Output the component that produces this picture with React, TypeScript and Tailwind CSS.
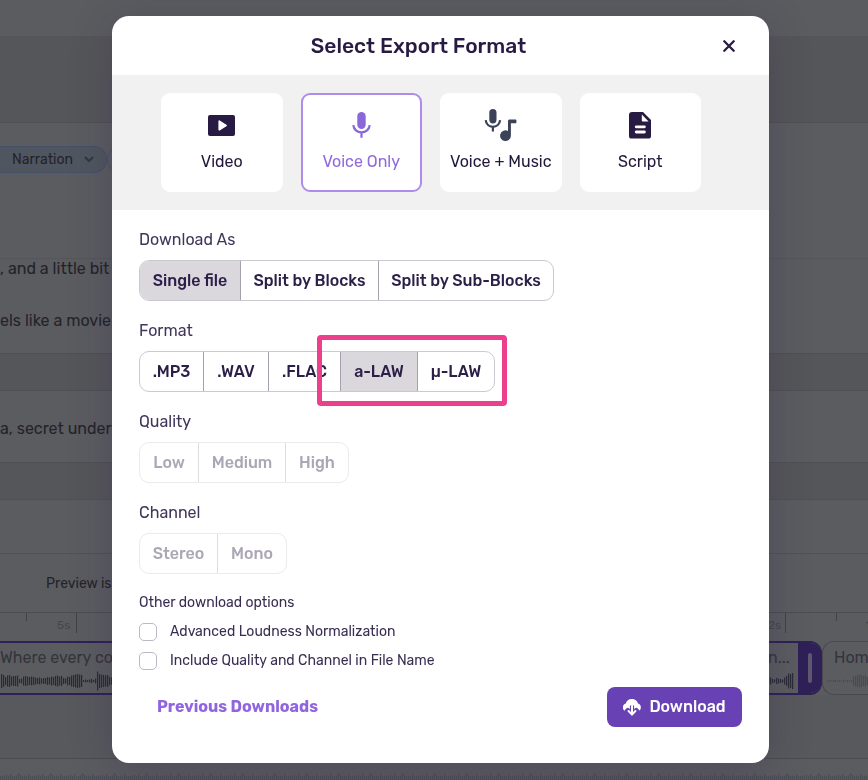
import type { ReactNode } from 'react'

type Option = { label: string; width: string }

const downloadAs: Option[] = [
  { label: 'Single file', width: 'w-[100px]' },
  { label: 'Split by Blocks', width: 'w-[138px]' },
  { label: 'Split by Sub-Blocks', width: 'w-[175px]' },
]

const formats: Option[] = [
  { label: '.MP3', width: 'w-[63px]' },
  { label: '.WAV', width: 'w-[65px]' },
  { label: '.FLAC', width: 'w-[72px]' },
  { label: 'a-LAW', width: 'w-[77px]' },
  { label: 'µ-LAW', width: 'w-[77px]' },
]

const qualities: Option[] = [
  { label: 'Low', width: 'w-[58px]' },
  { label: 'Medium', width: 'w-[87px]' },
  { label: 'High', width: 'w-[63px]' },
]

const channels: Option[] = [
  { label: 'Stereo', width: 'w-[77px]' },
  { label: 'Mono', width: 'w-[69px]' },
]

function OptionGroup({ label, options, selected, disabled, children }: {
  label: string
  options: Option[]
  selected?: string
  disabled?: boolean
  children?: ReactNode
}) {
  return (
    <div className="flex flex-col items-start">
      <span className="h-10 text-base leading-10 text-[#40355a]">{label}</span>
      <div role="group" aria-label={label} className={`relative flex h-[41px] rounded-[10px] border ${disabled ? 'border-[#ebeaed]' : 'border-[#cbc9d0]'}`}>
        {options.map((option, i) => (
          <button
            key={option.label}
            type="button"
            disabled={disabled}
            className={`${option.width} whitespace-nowrap text-base font-medium first:rounded-l-[9px] last:rounded-r-[9px] ${
              i > 0 ? 'border-l' : ''
            } ${disabled ? 'border-[#dddce1] text-[#aba7b4]' : 'border-[#a5a1ae] text-[#2b1f48]'} ${
              option.label === selected ? 'bg-[#dad8dd]' : ''
            }`}
          >
            {option.label}
          </button>
        ))}
        {children}
      </div>
    </div>
  )
}

function FormatCard({ label, active, children }: { label: string; active?: boolean; children: ReactNode }) {
  return (
    <button
      type="button"
      className={`flex h-[99px] flex-col items-center rounded-[9px] border-2 bg-white pt-3 text-base ${
        active ? 'border-[#ae8bee] text-[#9169dc]' : 'border-white text-[#23183b]'
      }`}
    >
      <span className="flex h-9 items-center justify-center">{children}</span>
      <span className="mt-1 whitespace-nowrap leading-[30px]">{label}</span>
    </button>
  )
}

function VideoIcon() {
  return (
    <svg width="27" height="21" viewBox="0 0 27 21">
      <rect width="27" height="21" rx="2" fill="#281b43" />
      <path d="M10.4 6.2c0-.7.7-1.1 1.3-.8l6.7 4.3c.6.4.6 1.1 0 1.5l-6.7 4.2c-.6.4-1.3 0-1.3-.7Z" fill="#fff" />
    </svg>
  )
}

function MicIcon() {
  return (
    <svg width="19" height="26" viewBox="0 0 19 26">
      <rect x="5.3" y="0" width="8.4" height="17" rx="4.2" fill="#8c67d9" />
      <path d="M1.3 13.1c.4 4.2 3.8 7.3 8.2 7.3s7.8-3.1 8.2-7.3M9.5 20.4v5.3" fill="none" stroke="#8c67d9" strokeWidth="2.2" />
    </svg>
  )
}

function MicMusicIcon() {
  return (
    <svg width="33" height="33" viewBox="0 0 33 33" fill="#3c4257">
      <rect x="5.3" y="0" width="7.2" height="14.4" rx="3.6" />
      <path d="M1.7 11.1c.4 4 3.3 6.7 7.2 6.7s6.8-2.7 7.2-6.7M8.9 17.8v4.6" fill="none" stroke="#3c4257" strokeWidth="2.2" />
      <path d="M24 12.2c0-1 .6-1.6 1.6-1.6h5.8c.7 0 1 .4 1 1v1.6c0 .7-.3 1-1 1h-4.5v12.5a5.4 5.4 0 1 1-2.9-4.8Z" />
    </svg>
  )
}

function ScriptIcon() {
  return (
    <svg width="22" height="27" viewBox="0 0 22 27">
      <path d="M3 0h11l8 8v16a2.6 2.6 0 0 1-2.6 2.6H2.6A2.6 2.6 0 0 1 0 24V3A3 3 0 0 1 3 0Z" fill="#281b43" />
      <path d="M12.8 2.4v5.8c0 .8.5 1.3 1.3 1.3h5.5Z" fill="#fff" />
      <path d="M7.2 14.8h8.2M7.2 20h8.2" stroke="#fff" strokeWidth="2.8" strokeLinecap="round" />
    </svg>
  )
}

function CloudDownloadIcon() {
  return (
    <svg width="18" height="18" viewBox="0 0 18 18">
      <path d="M3.6 13.6A4.1 4.1 0 0 1 2.7 5.6 6.4 6.4 0 0 1 15 5.5a4.2 4.2 0 0 1-.6 8.1Z" fill="#fff" />
      <path d="M9 7.6v4.6M2.8 14.2l2-2.2L9 15.8l4.2-3.8 2 2.2" fill="none" stroke="#6842b4" strokeWidth="4.2" strokeLinejoin="round" />
      <path d="M9 8v8M5.6 13 9 16.6l3.4-3.6" fill="none" stroke="#fff" strokeWidth="2" strokeLinecap="round" strokeLinejoin="round" />
    </svg>
  )
}

const voice = [14, 12, 8, 11, 12, 9, 10, 10, 11, 4, 5, 9, 10, 9, 8, 9, 8, 7, 6, 7, 5, 6, 6, 8, 7, 9, 8, 10, 11, 9, 10, 6, 5, 9, 8, 11, 12, 13, 14, 13, 12, 2, 3, 2, 3, 4, 2, 5, 19, 14, 13, 12, 11, 12, 8, 7, 17, 15, 14, 12, 4, 2, 3, 2, 2, 3, 4, 3, 5, 6]
const clipEnd = [5, 7, 4, 3, 6, 5, 4, 3, 7, 10, 15, 14, 16]
const nextClip = [1, 2, 1, 2, 2, 1, 2, 1, 3, 1, 2, 1, 2, 9, 11, 12, 13, 12, 10, 11, 8, 3]
const music = [6, 7, 5, 8, 6, 9, 5, 6, 7, 12, 8, 6, 7, 5, 9, 6]

function Wave({ bars, height, color }: { bars: number[]; height: number; color: string }) {
  return (
    <svg width={bars.length * 2} height={height} className="shrink-0">
      {bars.map((bar, i) => (
        <rect key={i} x={i * 2} y={(height - bar) / 2} width="1.2" height={bar} fill={color} />
      ))}
    </svg>
  )
}

function Editor() {
  return (
    <div aria-hidden="true" className="flex min-h-screen flex-col overflow-hidden bg-[#5b5c60] text-base text-[#232329]">
      <div className="h-9" />
      <div className="h-[87px] border-b border-[#4f5054] bg-[#555659]" />
      <div className="h-[136px] border-b border-[#55565b] pt-[23px]">
        <div className="flex items-center">
          <div className="flex h-[27px] w-[107px] shrink-0 items-center justify-between rounded-r-full border border-l-0 border-[#45506a] bg-[#50565f] px-3 text-sm">
            Narration
            <svg width="10" height="7" viewBox="0 0 10 7" fill="none" stroke="#34343f" strokeWidth="2">
              <path d="m1 1 4 4 4-4" />
            </svg>
          </div>
          <div className="h-[27px] w-20 rounded-full border border-[#554b68]" />
        </div>
      </div>
      <div className="h-[94px] overflow-hidden whitespace-nowrap">
        <p className="h-5 leading-5">, and a little bit</p>
        <p className="mt-8 h-5 leading-5">els like a movie</p>
      </div>
      <div className="h-[38px] border-y border-[#4f5054] bg-[#555659]" />
      <p className="h-[71px] whitespace-nowrap pt-[26px] leading-6">a, secret underg</p>
      <div className="h-[38px] border-y border-[#4f5054] bg-[#555659]" />
      <div className="h-[54px] border-b border-[#515256]" />
      <p className="h-[59px] border-b border-[#4c4d51] pl-[46px] pt-5 text-sm">Preview is</p>
      <div className="flex h-7 justify-between text-xs text-[#45464b]">
        <div className="flex">
          <i className="ml-[26px] h-2 w-px bg-[#414247]" />
          <span className="ml-[30px] pt-1">5s</span>
          <i className="ml-1.5 h-5 w-px bg-[#414247]" />
        </div>
        <div className="flex w-[100px] overflow-hidden">
          <span className="pt-1">2s</span>
          <i className="ml-1 h-5 w-px shrink-0 bg-[#414247]" />
          <i className="ml-[50px] h-2 w-px shrink-0 bg-[#414247]" />
          <span className="ml-7 pt-1">1</span>
        </div>
      </div>
      <div className="flex h-[54px] text-[#34343b]">
        <div className="flex min-w-0 flex-1 justify-between overflow-hidden rounded-r-xl border-y-2 border-[#2f2157]">
          <div className="pt-[3px]">
            <p className="h-6 whitespace-nowrap leading-6">Where every co</p>
            <div className="pl-px pt-px"><Wave bars={voice} height={20} color="#2a2a36" /></div>
          </div>
          <div className="flex">
            <div className="pt-[3px]">
              <p className="h-6 leading-6">n...</p>
              <div className="pt-px"><Wave bars={clipEnd} height={20} color="#2a2a36" /></div>
            </div>
            <div className="ml-1 flex w-6 items-center justify-center bg-[#2f2157]">
              <div className="h-[30px] w-1 rounded-full bg-[#5d5870]" />
            </div>
          </div>
        </div>
        <div className="w-[46px] overflow-hidden rounded-l-xl border border-r-0 border-[#49494f] pl-1 pt-1">
          <p className="h-6 pl-[7px] leading-6">Hom</p>
          <div className="pt-px"><Wave bars={nextClip} height={20} color="#4a4a51" /></div>
        </div>
      </div>
      <div className="h-16 border-b border-[#4a4b50] bg-[#58595d]" />
      <div className="pt-[13px]">
        <div className="flex">
          {Array.from({ length: 28 }, (_, i) => (
            <Wave key={i} bars={music} height={14} color="#4c4d53" />
          ))}
        </div>
      </div>
    </div>
  )
}

export default function App() {
  return (
    <div className="h-screen overflow-hidden font-['Rubik','Roboto',sans-serif]">
      <Editor />
      <div className="fixed inset-0 flex items-start justify-center overflow-auto pl-[13px] pt-4">
        <main role="dialog" aria-labelledby="title" className="w-full max-w-[657px] rounded-[17px] bg-white pb-9 shadow-[0_8px_40px_rgba(45,35,75,0.3)]">
          <header className="flex h-[59px] items-center pl-3">
            <h1 id="title" className="flex-1 text-center text-[21px] font-medium text-[#281b43]">Select Export Format</h1>
            <button type="button" aria-label="Close" className="mr-6 flex size-8 items-center justify-center">
              <svg width="12" height="12" viewBox="0 0 12 12" fill="none" stroke="#281b43" strokeWidth="2.3" strokeLinecap="round">
                <path d="m1.3 1.3 9.4 9.4M10.7 1.3l-9.4 9.4" />
              </svg>
            </button>
          </header>

          <section className="grid grid-cols-4 gap-[18px] bg-[#f1f1f1] py-[18px] pl-[49px] pr-[68px]">
            <FormatCard label="Video"><VideoIcon /></FormatCard>
            <FormatCard label="Voice Only" active><MicIcon /></FormatCard>
            <FormatCard label="Voice + Music"><MicMusicIcon /></FormatCard>
            <FormatCard label="Script"><ScriptIcon /></FormatCard>
          </section>

          <form className="px-[27px] pt-[10px]">
            <div className="flex flex-col gap-[10px]">
              <OptionGroup label="Download As" options={downloadAs} selected="Single file" />
              <OptionGroup label="Format" options={formats} selected="a-LAW">
                <div className="pointer-events-none absolute -right-[13px] -top-[17px] h-[71px] w-[190px] rounded-sm border-[5px] border-[#ec3f8c]" />
              </OptionGroup>
              <OptionGroup label="Quality" options={qualities} disabled />
              <OptionGroup label="Channel" options={channels} disabled />
            </div>

            <fieldset className="mt-[19px] text-sm text-[#392e51]">
              <legend className="leading-5">Other download options</legend>
              <label className="mt-[9px] flex h-5 items-center gap-[13px]">
                <input type="checkbox" className="size-[18px] shrink-0 appearance-none rounded-[5px] border border-[#bcb8c6] bg-white" />
                Advanced Loudness Normalization
              </label>
              <label className="mt-[9px] flex h-5 items-center gap-[13px]">
                <input type="checkbox" className="size-[18px] shrink-0 appearance-none rounded-[5px] border border-[#bcb8c6] bg-white" />
                Include Quality and Channel in File Name
              </label>
            </fieldset>

            <div className="mt-4 flex items-center justify-between pl-[18px]">
              <a href="#previous" className="text-base font-bold text-[#9065df]">Previous Downloads</a>
              <button type="button" className="flex h-10 w-[135px] items-center justify-center gap-2 rounded-lg bg-[#6842b4] text-base font-medium text-white">
                <CloudDownloadIcon />
                Download
              </button>
            </div>
          </form>
        </main>
      </div>
    </div>
  )
}
